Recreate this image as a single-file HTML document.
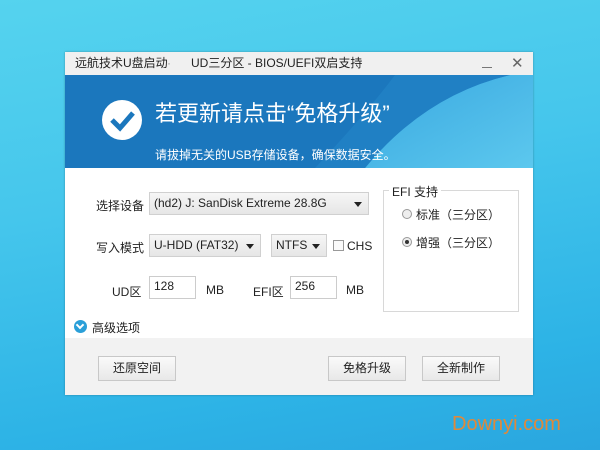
<!DOCTYPE html>
<html><head><meta charset="utf-8"><style>
*{margin:0;padding:0;box-sizing:border-box}
body{width:600px;height:450px;overflow:hidden;position:relative;font-family:"Liberation Sans","Noto Sans CJK SC",sans-serif;font-size:12px;color:#222;
background:linear-gradient(170deg,#55d3ee 0%,#45c6ec 40%,#2db3e6 80%,#2aa6df 100%)}
.a{position:absolute}
.win{left:65px;top:52px;width:468px;height:343px;background:#fff;box-shadow:0 0 2px rgba(0,0,0,.3)}
.title{left:0;top:0;width:468px;height:23px;background:#f0f0f0;font-size:12px;line-height:23px}
.sel{background:linear-gradient(#f6f6f6,#e6e6e6);border:1px solid #d0d0d0;height:23px;line-height:21px;padding-left:4px;font-size:12px}
.sel:after{content:"";position:absolute;right:6px;top:9px;border:4px solid transparent;border-top:5px solid #222}
.inp{border:1px solid #ccc;height:23px;background:#fff;padding-left:4px;line-height:18px}
.btn{border:1px solid #c8c8c8;background:linear-gradient(#fafafa,#e8e8e8);height:25px;width:78px;text-align:center;line-height:23px}
.rad{width:10px;height:10px;border:1px solid #999;border-radius:50%;background:#eee}
</style></head><body>
<div class="a win">
 <div class="a title"><span class="a" style="left:10px">远航技术U盘启动</span><span class="a" style="left:102px;color:#999">·</span><span class="a" style="left:126px">UD三分区 - BIOS/UEFI双启支持</span>
 <span class="a" style="left:417px;top:4px;width:10px;height:1px;background:#777;top:15px"></span>
 <span class="a" style="left:446px;font-size:15px;color:#666">✕</span></div>
 <svg class="a" style="left:0;top:23px" width="468" height="93"><defs><linearGradient id="g" x1="0" y1="0" x2="1" y2="1"><stop offset="0" stop-color="#3aa8e0"/><stop offset="1" stop-color="#5cc8ee"/></linearGradient></defs>
 <rect width="468" height="93" fill="#1b77bd"/>
 <path d="M300 93 Q360 20 445 0 L468 0 L468 93Z" fill="url(#g)"/>
 <path d="M330 0 Q300 40 250 93 L300 93 Q360 20 445 0Z" fill="#2285c8" opacity=".7"/>
 <circle cx="57" cy="45" r="20" fill="#fff"/>
 <path d="M47 45 L55 53 L68 38" stroke="#1b77bd" stroke-width="5" fill="none"/>
 </svg>
 <div class="a" style="left:90px;top:44px;font-size:22px;color:#fff">若更新请点击“免格升级”</div>
 <div class="a" style="left:90px;top:94px;font-size:12px;color:#fff">请拔掉无关的USB存储设备，确保数据安全。</div>
 <div class="a" style="left:31px;top:145px">选择设备</div>
 <div class="a sel" style="left:84px;top:140px;width:220px">(hd2) J: SanDisk Extreme 28.8G</div>
 <div class="a" style="left:31px;top:187px">写入模式</div>
 <div class="a sel" style="left:84px;top:182px;width:112px">U-HDD (FAT32)</div>
 <div class="a sel" style="left:206px;top:182px;width:56px">NTFS</div>
 <div class="a" style="left:268px;top:188px;width:11px;height:11px;border:1px solid #999;background:#fafafa"></div>
 <div class="a" style="left:282px;top:187px">CHS</div>
 <div class="a" style="left:47px;top:231px">UD区</div>
 <div class="a inp" style="left:84px;top:224px;width:47px">128</div>
 <div class="a" style="left:141px;top:231px">MB</div>
 <div class="a" style="left:188px;top:231px">EFI区</div>
 <div class="a inp" style="left:225px;top:224px;width:47px">256</div>
 <div class="a" style="left:281px;top:231px">MB</div>
 <div class="a" style="left:318px;top:138px;width:136px;height:122px;border:1px solid #d8d8d8"></div>
 <div class="a" style="left:324px;top:131px;background:#fff;padding:0 3px">EFI 支持</div>
 <div class="a rad" style="left:337px;top:157px"></div><div class="a" style="left:351px;top:154px">标准（三分区）</div>
 <div class="a rad" style="left:337px;top:185px"></div><div class="a" style="left:340px;top:188px;width:4px;height:4px;border-radius:50%;background:#333"></div><div class="a" style="left:351px;top:182px">增强（三分区）</div>
 <div class="a" style="left:9px;top:268px;width:13px;height:13px;border-radius:50%;background:#2a9fd8"></div>
 <div class="a" style="left:12px;top:270px;width:6px;height:6px;border-right:2px solid #fff;border-bottom:2px solid #fff;transform:rotate(45deg)"></div>
 <div class="a" style="left:27px;top:267px">高级选项</div>
 <div class="a" style="left:0;top:286px;width:468px;height:57px;background:#f2f2f2"></div>
 <div class="a btn" style="left:33px;top:304px">还原空间</div>
 <div class="a btn" style="left:263px;top:304px">免格升级</div>
 <div class="a btn" style="left:357px;top:304px">全新制作</div>
</div>
<div class="a" style="left:452px;top:413px;font-size:20px;color:#e0893a">Downyi.com</div>
</body></html>
